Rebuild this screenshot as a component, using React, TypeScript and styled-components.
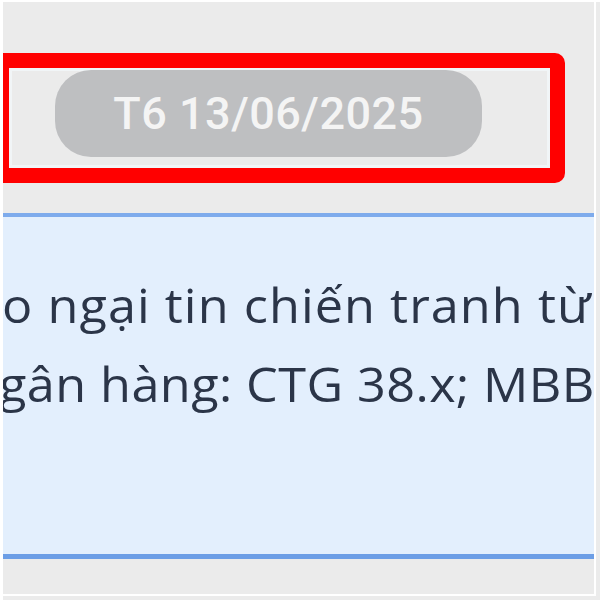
import styled, { createGlobalStyle } from "styled-components";

const GlobalStyle = createGlobalStyle`
  html, body {
    margin: 0;
    padding: 0;
    background: #ebebeb;
  }
`;

const Frame = styled.div`
  width: 600px;
  height: 600px;
  box-sizing: border-box;
  background: #ebebeb;
  border-top: 2px solid #ffffff;
  border-left: 3px solid #ffffff;
  overflow: hidden;
`;

const Cell = styled.div`
  width: 593px;
  height: 594px;
  box-sizing: border-box;
  border-right: 2px solid #ffffff;
  border-bottom: 2px solid #ffffff;
  display: flex;
  flex-direction: column;
`;

// red annotation frame drawn round the date row
const DateRow = styled.div`
  margin: 51px 0 0 -9px;
  width: 571px;
  height: 130px;
  box-sizing: border-box;
  border: 15px solid #ff0000;
  border-radius: 10px;
  box-shadow: inset 0 0 0 3px #f1f5f7;
  padding: 2px 0 0 46px;
  flex-shrink: 0;
`;

const DatePill = styled.div`
  width: 427px;
  height: 87px;
  border-radius: 36px;
  background: #bebfc1;
  display: flex;
  align-items: center;
  justify-content: center;
  font-family: Roboto, "Liberation Sans", sans-serif;
  font-weight: 500;
  font-size: 45px;
  letter-spacing: 0.5px;
  color: #f4f4f4;
  box-sizing: border-box;
`;

const NewsPanel = styled.div`
  margin-top: 30px;
  height: 346px;
  box-sizing: border-box;
  background: #e3effd;
  border-top: 4px solid #7eabec;
  border-bottom: 5px solid #6c9ee6;
  padding-top: 48px;
  overflow: hidden;
  flex-shrink: 0;
`;

// the shot is zoomed a little wider than tall, hence the scaleX
const Line = styled.div<{ $shift: number; $spacing: number }>`
  margin-left: ${({ $shift }) => $shift}px;
  letter-spacing: ${({ $spacing }) => $spacing}px;
  white-space: nowrap;
  font-family: "Open Sans", "Noto Sans", sans-serif;
  font-size: 48px;
  line-height: 79px;
  color: #2b3548;
  transform: scaleX(1.05);
  transform-origin: left center;
`;

const App = () => {
  return (
    <>
      <GlobalStyle />
      <Frame>
        <Cell>
          <DateRow>
            <DatePill>T6 13/06/2025</DatePill>
          </DateRow>
          <NewsPanel>
            <Line $shift={-1} $spacing={1}>o ngại tin chiến tranh từ</Line>
            <Line $shift={-4} $spacing={0.4}>gân hàng: CTG 38.x; MBB</Line>
          </NewsPanel>
        </Cell>
      </Frame>
    </>
  );
};

export default App;
